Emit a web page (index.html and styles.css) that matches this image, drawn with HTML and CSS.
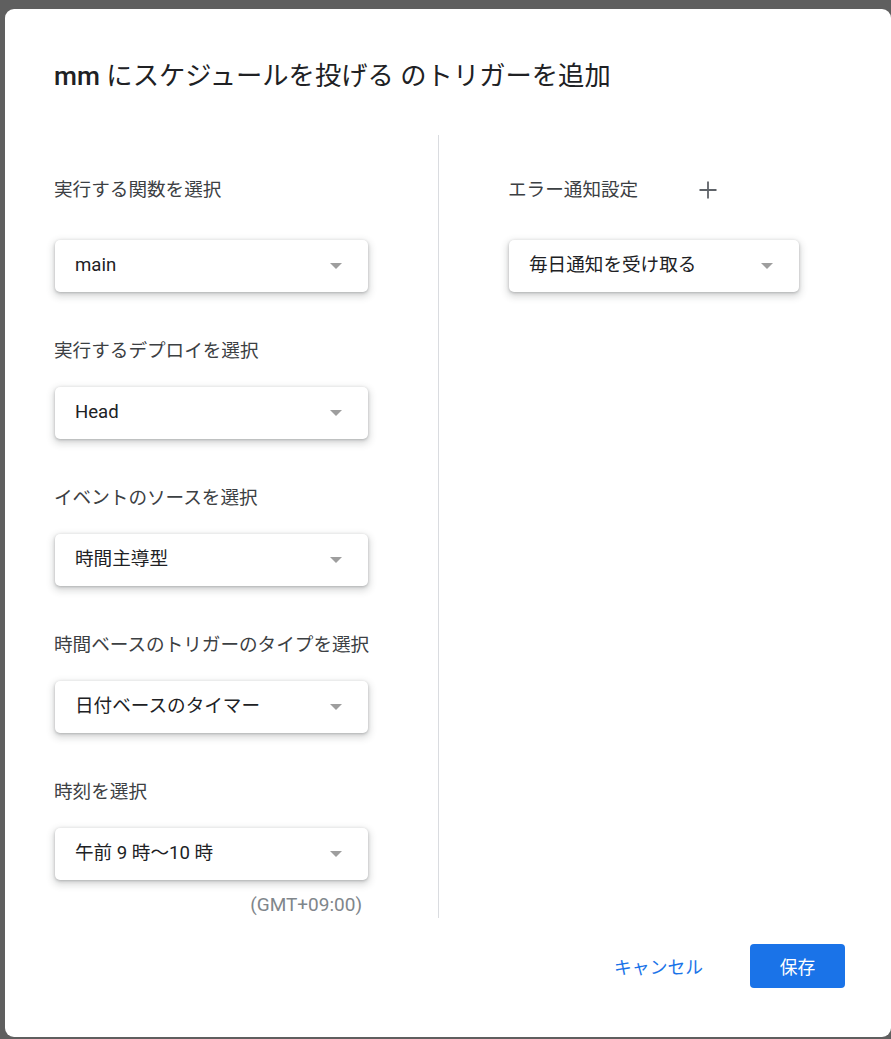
FILE: index.html
```html
<!DOCTYPE html>
<html lang="ja">
<head>
<meta charset="utf-8">
<title>トリガーを追加</title>
<link rel="stylesheet" href="styles.css">
</head>
<body>
<div class="dialog">
  <h1 class="title"><span class="latin">mm</span> にスケジュールを投げる のトリガーを追加</h1>
  <div class="columns">
    <div class="col col-left">
      <div class="head-row"><span class="label">実行する関数を選択</span></div>
      <div class="select select-first"><span class="value">main</span><span class="arrow"></span></div>

      <div class="label label-field">実行するデプロイを選択</div>
      <div class="select"><span class="value">Head</span><span class="arrow"></span></div>

      <div class="label label-field">イベントのソースを選択</div>
      <div class="select"><span class="value">時間主導型</span><span class="arrow"></span></div>

      <div class="label label-field">時間ベースのトリガーのタイプを選択</div>
      <div class="select"><span class="value">日付ベースのタイマー</span><span class="arrow"></span></div>

      <div class="label label-field">時刻を選択</div>
      <div class="select"><span class="value">午前 9 時〜10 時</span><span class="arrow"></span></div>
      <div class="tz">(GMT+09:00)</div>
    </div>
    <div class="col col-right">
      <div class="head-row">
        <span class="label">エラー通知設定</span>
        <button class="icon-btn" aria-label="追加">
          <svg width="20" height="20" viewBox="0 0 20 20"><path d="M10 1.5v17M1.5 10h17" stroke="#5f6368" stroke-width="1.8" fill="none"/></svg>
        </button>
      </div>
      <div class="select select-first select-narrow"><span class="value">毎日通知を受け取る</span><span class="arrow"></span></div>
    </div>
  </div>
  <div class="actions">
    <button class="btn btn-text">キャンセル</button>
    <button class="btn btn-primary">保存</button>
  </div>
</div>
</body>
</html>
```

FILE: styles.css
```css
html, body {
  margin: 0;
  padding: 0;
}
body {
  background: #5f5f5f;
  font-family: "Roboto", "Noto Sans CJK JP", sans-serif;
  width: 891px;
  height: 1039px;
  overflow: hidden;
}
.dialog {
  margin: 9px 0 0 5px;
  width: 886px;
  height: 1028px;
  box-sizing: border-box;
  background: #fff;
  border-radius: 9px;
  padding: 51px 46px 49px 49px;
  display: flex;
  flex-direction: column;
}
.title {
  margin: 0;
  font-size: 26.3px;
  line-height: 32px;
  font-weight: 400;
  color: #202124;
  flex-shrink: 0;
}
.title .latin {
  font-weight: 500;
}
.columns {
  display: flex;
  margin-top: 43px;
  height: 783px;
  flex-shrink: 0;
}
.col {
  display: flex;
  flex-direction: column;
  padding-top: 31px;
  box-sizing: border-box;
}
.col > * {
  flex-shrink: 0;
}
.col-left {
  width: 385px;
  flex-shrink: 0;
  padding-left: 0;
  padding-right: 70px;
  border-right: 1px solid #dadce0;
}
.col-right {
  padding-left: 69px;
}
.head-row {
  height: 48px;
  display: flex;
  align-items: center;
}
.label {
  font-size: 18.6px;
  line-height: 24px;
  color: #3c4043;
  white-space: nowrap;
}
.label-field {
  margin-top: 47px;
  margin-bottom: 24px;
}
.select {
  height: 52px;
  width: 313px;
  margin-left: 1px;
  box-sizing: border-box;
  background: #fff;
  border-radius: 5px;
  box-shadow: 0 1px 3px 0 rgba(60, 64, 67, 0.3), 0 3px 7px 2px rgba(60, 64, 67, 0.18);
  display: flex;
  align-items: center;
  justify-content: space-between;
  padding: 0 26px 0 20px;
}
.select-first {
  margin-top: 26px;
}
.select-narrow {
  width: 290px;
}
.value {
  font-size: 18.6px;
  line-height: 24px;
  color: #202124;
  white-space: nowrap;
  margin-top: -2px;
}
.arrow {
  width: 0;
  height: 0;
  border-left: 6.5px solid transparent;
  border-right: 6.5px solid transparent;
  border-top: 6.5px solid #9e9e9e;
}
.tz {
  margin-top: 15px;
  font-size: 19px;
  line-height: 20px;
  color: #80868b;
  text-align: right;
  padding-right: 6px;
}
.icon-btn {
  width: 48px;
  height: 48px;
  margin-left: 46px;
  border: none;
  background: transparent;
  padding: 0;
  display: flex;
  align-items: center;
  justify-content: center;
}
.actions {
  margin-top: 26px;
  display: flex;
  justify-content: flex-end;
  gap: 24px;
  flex-shrink: 0;
}
.btn {
  height: 44px;
  border: none;
  border-radius: 4px;
  font-family: "Roboto", "Noto Sans CJK JP", sans-serif;
  font-size: 17.8px;
  cursor: pointer;
}
.btn-text {
  background: transparent;
  color: #1a73e8;
  padding: 0 23px;
}
.btn-primary {
  width: 95px;
  background: #1a73e8;
  color: #fff;
}
```
